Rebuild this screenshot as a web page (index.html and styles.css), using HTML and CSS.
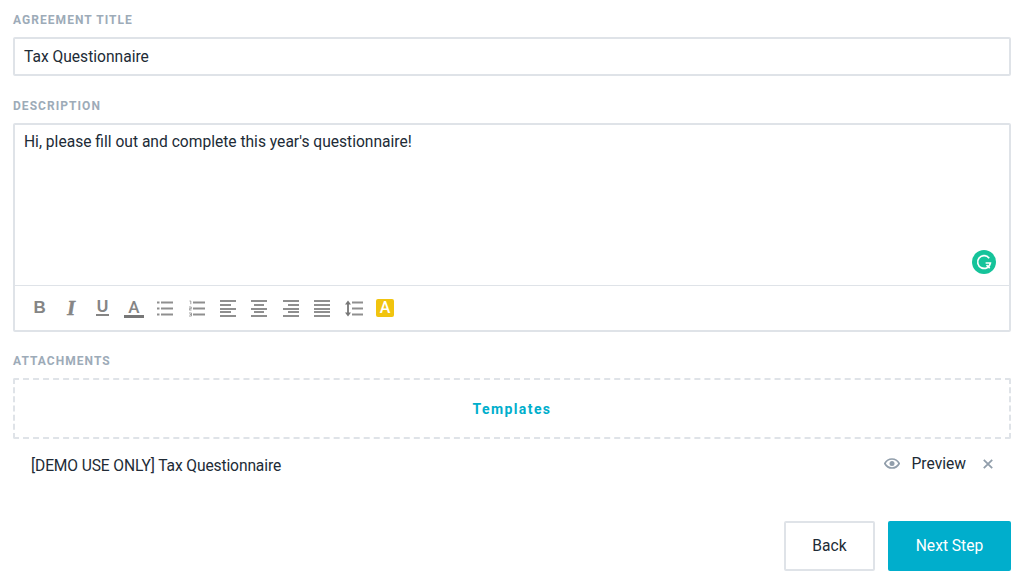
FILE: index.html
```html
<!DOCTYPE html>
<html lang="en">
<head>
<meta charset="utf-8">
<title>Agreement</title>
<link rel="stylesheet" href="styles.css">
</head>
<body>
<main class="form">
  <section class="field field-title">
    <label class="label">AGREEMENT TITLE</label>
    <div class="input">Tax Questionnaire</div>
  </section>
  <section class="field field-desc">
    <label class="label">DESCRIPTION</label>
    <div class="editor">
      <div class="editor-body">
        <p class="editor-text">Hi, please fill out and complete this year's questionnaire!</p>
        <svg class="grammarly" width="24" height="24" viewBox="0 0 24 24"><circle cx="12" cy="12" r="12" fill="#15c39a"/><path d="M17.2 8.2A6.400 6.400 0 1 0 18.400 13H13.600" fill="none" stroke="#fff" stroke-width="1.700"/><path d="M14.500 15.200l3.200 3" stroke="#fff" stroke-width="1.700"/></svg>
      </div>
      <div class="toolbar">
        <span class="tool"><span class="glyph glyph-b">B</span></span>
        <span class="tool"><span class="glyph glyph-i">I</span></span>
        <span class="tool"><span class="glyph glyph-u">U</span></span>
        <span class="tool"><span class="glyph glyph-a">A</span></span>
        <span class="tool"><svg class="ico" width="16" height="17" viewBox="0 0 16 17"><path d="M4 2.500h12M4 8.500h12M4 14.500h12M0 2.500h2.500M0 8.500h2.500M0 14.500h2.500" stroke="#8f8f8f" stroke-width="2"/></svg></span>
        <span class="tool"><svg class="ico" width="16" height="17" viewBox="0 0 16 17"><path d="M4 2.500h12M4 8.500h12M4 14.500h12" stroke="#8f8f8f" stroke-width="2"/><path d="M.5 1h1.300v3.200M0 7h2.300v1.700H.2v1.300h2.300M0 13h2.500v3H0M.8 14.500h1.500" fill="none" stroke="#8a8a8a" stroke-width=".8"/></svg></span>
        <span class="tool"><svg class="ico" width="16" height="17" viewBox="0 0 16 17"><path d="M0 1h16M0 5h11M0 9h16M0 12h11M0 16h16" stroke="#8f8f8f" stroke-width="2"/></svg></span>
        <span class="tool"><svg class="ico" width="16" height="17" viewBox="0 0 16 17"><path d="M0 1h16M3 5h10M0 9h16M3 12h10M0 16h16" stroke="#8f8f8f" stroke-width="2"/></svg></span>
        <span class="tool"><svg class="ico" width="16" height="17" viewBox="0 0 16 17"><path d="M0 1h16M5 5h11M0 9h16M5 12h11M0 16h16" stroke="#8f8f8f" stroke-width="2"/></svg></span>
        <span class="tool"><svg class="ico" width="16" height="17" viewBox="0 0 16 17"><path d="M0 1h16M0 5h16M0 9h16M0 12h16M0 16h16" stroke="#8f8f8f" stroke-width="2"/></svg></span>
        <span class="tool"><svg class="ico" width="18" height="17" viewBox="0 0 18 17"><path d="M3 2v13" stroke="#777" stroke-width="1.800"/><path d="M0 4.500L3 .5 6 4.500zM0 12.500L3 16.500 6 12.500z" fill="#777"/><path d="M7 2.500h11M7 8.500h11M7 14.500h11" stroke="#8f8f8f" stroke-width="2"/></svg></span>
        <span class="tool"><span class="glyph-hl">A</span></span>
      </div>
    </div>
  </section>
  <section class="field field-attach">
    <label class="label">ATTACHMENTS</label>
    <div class="dropzone">Templates</div>
    <div class="attachment">
      <span class="attachment-name">[DEMO USE ONLY] Tax Questionnaire</span>
      <span class="attachment-actions">
        <svg class="eye" width="16" height="11" viewBox="0 0 16 11"><path d="M.8 5.500C2.500 2.400 5 1 8 1s5.500 1.400 7.200 4.500C13.500 8.600 11 10 8 10S2.500 8.600.8 5.500z" fill="none" stroke="#919eab" stroke-width="1.700"/><circle cx="8" cy="5.500" r="2.500" fill="#919eab"/></svg>
        <span class="preview">Preview</span>
        <svg class="close" width="10" height="10" viewBox="0 0 10 10"><path d="M.8.800l8.400 8.400M9.200.800L.8 9.200" stroke="#919eab" stroke-width="1.800"/></svg>
      </span>
    </div>
  </section>
  <footer class="actions">
    <button class="btn btn-back">Back</button>
    <button class="btn btn-next">Next Step</button>
  </footer>
</main>
</body>
</html>
```
FILE: styles.css
```css
* { box-sizing: border-box; }
html, body { margin: 0; background: #fff; }
body {
  font-family: Roboto, sans-serif;
  color: #212b36;
  overflow: hidden;
}
.form { width: 1025px; height: 586px; padding: 14px 14px 0 13px; display: flex; flex-direction: column; }
.label {
  display: block;
  font-family: Roboto, sans-serif;
  font-size: 12px;
  line-height: 13px;
  font-weight: 700;
  letter-spacing: 1.050px;
  color: #9dabb8;
}
.input {
  margin-top: 10px;
  height: 39px;
  border: 2px solid #dfe3e8;
  border-radius: 2px;
  padding: 0 9px;
  font-size: 15.600px;
  line-height: 36px;
}
.field-desc { margin-top: 24px; }
.editor { margin-top: 10px; height: 209px; border: 2px solid #dfe3e8; border-radius: 2px; display: flex; flex-direction: column; }
.editor-body { position: relative; flex: 1; padding: 7px 9px; border-bottom: 1px solid #dfe3e8; }
.editor-text { margin: 0; font-size: 15.600px; line-height: 20px; }
.grammarly { position: absolute; right: 13px; bottom: 11px; display: block; }
.toolbar { height: 44px; flex: none; display: flex; align-items: center; padding: 0 0 0 9px; }
.tool { width: 31.400px; height: 24px; display: flex; align-items: center; justify-content: center; flex: none; }
.ico { display: block; }
.glyph { font-family: "Liberation Sans", sans-serif; font-weight: 700; font-size: 17px; line-height: 18px; color: #858585; display: block; }
.glyph-i { font-family: "Liberation Serif", serif; font-style: italic; font-size: 20px; -webkit-text-stroke: 0.6px #858585; }
.glyph-u { font-size: 16px; border-bottom: 2px solid #858585; line-height: 15px; padding: 0 1px; margin-top: -1px; }
.glyph-a { font-family: Roboto, sans-serif; font-weight: 500; border-bottom: 3px solid #777; line-height: 15px; padding: 0 4px; margin-top: 2px; }
.glyph-hl {
  width: 18px; height: 18px; border-radius: 2px; background: #f1c40f; color: #fff;
  font-family: Roboto, sans-serif; font-weight: 500; font-size: 16px; line-height: 18px; text-align: center;
}
.field-attach { margin-top: 23px; }
.dropzone {
  margin-top: 10px;
  height: 61px;
  border: 2px dashed #dfe3e8;
  border-radius: 2px;
  text-align: center;
  font-family: Roboto, sans-serif;
  font-size: 14px;
  font-weight: 700;
  letter-spacing: 1.400px;
  line-height: 58px;
  color: #00aecc;
}
.attachment { display: flex; justify-content: space-between; align-items: center; height: 30px; margin-top: 11px; padding-left: 18px; padding-right: 18px; font-size: 15.600px; }
.attachment-name { margin-top: 2px; letter-spacing: -0.120px; }
.attachment-actions { display: flex; align-items: center; margin-top: -3px; }
.preview { margin-left: 12px; margin-right: 17px; }
.eye, .close { display: block; }
.actions { display: flex; justify-content: flex-end; gap: 13px; margin-top: 41px; }
.btn { height: 50px; border-radius: 2px; font-family: inherit; font-size: 15.600px; padding-bottom: 2px; }
.btn-back { width: 91px; background: #fff; border: 2px solid #dfe3e8; color: #212b36; }
.btn-next { width: 123px; background: #00aecc; border: 0; color: #fff; }
```
